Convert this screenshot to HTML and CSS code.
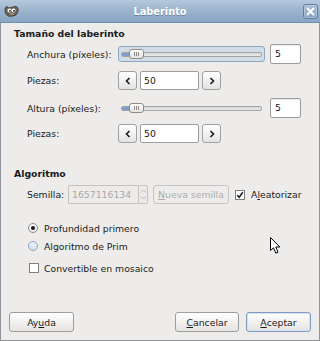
FILE: index.html
```html
<!DOCTYPE html>
<html>
<head>
<meta charset="utf-8">
<link rel="stylesheet" href="styles.css">
</head>
<body>
<div class="window">
  <div class="titlebar">
    <div class="tb-left">
      <svg class="app-icon" width="15" height="13" viewBox="0 0 15 13">
        <path d="M1 3 Q3 0 5 3 L9 2 Q12 0 14 3 Q15 7 12 10 Q8 12 4 11 Q1 9 1 6 Z" fill="#6b655a" stroke="#3b372f" stroke-width="0.8"/>
        <circle cx="5.5" cy="5.5" r="2" fill="#fff"/>
        <circle cx="9.5" cy="5.5" r="2" fill="#fff"/>
        <circle cx="6" cy="5.8" r="0.9" fill="#000"/>
        <circle cx="10" cy="5.8" r="0.9" fill="#000"/>
        <path d="M6 9 L10 9" stroke="#c8b48a" stroke-width="1"/>
      </svg>
    </div>
    <span class="title">Laberinto</span>
    <div class="tb-right">
      <span class="close">
        <svg width="9" height="9" viewBox="0 0 9 9"><path d="M1.5 1.5 L7.5 7.5 M7.5 1.5 L1.5 7.5" stroke="#fff" stroke-width="2" stroke-linecap="round"/></svg>
      </span>
    </div>
  </div>

  <div class="content">
    <div class="section-title">Tamaño del laberinto</div>

    <div class="row r1">
      <span class="label">Anchura (píxeles):</span>
      <div class="scale focused">
        <div class="trough"><div class="fill"></div></div>
        <div class="thumb"><i></i><i></i><i></i></div>
      </div>
      <div class="spin">5</div>
    </div>

    <div class="row r2">
      <span class="label">Piezas:</span>
      <div class="stepper">
        <span class="btn-small">
          <svg width="6" height="8" viewBox="0 0 6 8"><path d="M4.5 1 L1.5 4 L4.5 7" fill="none" stroke="#1a1a1a" stroke-width="1.6"/></svg>
        </span>
        <span class="entry">50</span>
        <span class="btn-small">
          <svg width="6" height="8" viewBox="0 0 6 8"><path d="M1.5 1 L4.5 4 L1.5 7" fill="none" stroke="#1a1a1a" stroke-width="1.6"/></svg>
        </span>
      </div>
    </div>

    <div class="row r3">
      <span class="label">Altura (píxeles):</span>
      <div class="scale">
        <div class="trough"><div class="fill"></div></div>
        <div class="thumb"><i></i><i></i><i></i></div>
      </div>
      <div class="spin">5</div>
    </div>

    <div class="row r4">
      <span class="label">Piezas:</span>
      <div class="stepper">
        <span class="btn-small">
          <svg width="6" height="8" viewBox="0 0 6 8"><path d="M4.5 1 L1.5 4 L4.5 7" fill="none" stroke="#1a1a1a" stroke-width="1.6"/></svg>
        </span>
        <span class="entry">50</span>
        <span class="btn-small">
          <svg width="6" height="8" viewBox="0 0 6 8"><path d="M1.5 1 L4.5 4 L1.5 7" fill="none" stroke="#1a1a1a" stroke-width="1.6"/></svg>
        </span>
      </div>
    </div>

    <div class="section-title t2">Algoritmo</div>

    <div class="row seed-row">
      <span class="label seed-label">Semilla:</span>
      <div class="seed-spin">
        <span class="seed-entry">1657116134</span>
        <span class="seed-arrows">
          <svg width="7" height="4" viewBox="0 0 7 4"><path d="M1 3.5 L3.5 1 L6 3.5" fill="none" stroke="#b5b5b5" stroke-width="1"/></svg>
          <svg width="7" height="4" viewBox="0 0 7 4"><path d="M1 0.5 L3.5 3 L6 0.5" fill="none" stroke="#b5b5b5" stroke-width="1"/></svg>
        </span>
      </div>
      <span class="btn disabled new-seed"><u>N</u>ueva semilla</span>
      <span class="check checked">
        <svg width="8" height="8" viewBox="0 0 8 8"><path d="M1.2 4.2 L3.2 6.3 L6.8 1.2" fill="none" stroke="#1a1a1a" stroke-width="1.5"/></svg>
      </span>
      <span class="check-label">A<u>l</u>eatorizar</span>
    </div>

    <div class="opt o1">
      <span class="radio selected"><i></i></span>
      <span>Profundidad primero</span>
    </div>
    <div class="opt o2">
      <span class="radio hover"></span>
      <span>Algoritmo de Prim</span>
    </div>
    <div class="opt o3">
      <span class="check box"></span>
      <span>Convertible en mosaico</span>
    </div>

    <div class="buttons">
      <span class="btn big">Ay<u>u</u>da</span>
      <span class="spacer"></span>
      <span class="btn big cancel"><u>C</u>ancelar</span>
      <span class="btn big default"><u>A</u>ceptar</span>
    </div>
  </div>
</div>

<svg class="cursor" width="12" height="18" viewBox="0 0 12 18">
  <path d="M0.5 0.5 L0.5 13.5 L3.5 10.8 L5.8 16.2 L8 15.2 L5.8 10 L9.8 10 Z" fill="#fff" stroke="#000" stroke-width="1" stroke-linejoin="round"/>
</svg>
</body>
</html>
```

FILE: styles.css
```css
* { box-sizing: border-box; }
html, body { margin: 0; padding: 0; background: #edeceb; }
body {
  font-family: "DejaVu Sans", "Liberation Sans", sans-serif;
  font-size: 9.3px;
  color: #1a1a1a;
  width: 320px;
  height: 341px;
  overflow: hidden;
  position: relative;
}
u { text-decoration: underline; text-underline-offset: 1px; }

.window {
  width: 320px;
  height: 341px;
  display: flex;
  flex-direction: column;
  border: 1px solid #8d939a;
  border-top: 0;
  background: #edeceb;
}

.titlebar {
  height: 23px;
  flex: none;
  display: grid;
  grid-template-columns: 1fr auto 1fr;
  align-items: center;
  background: linear-gradient(#b4c8dd, #9ab3cd 50%, #8aa6c4);
  border-bottom: 1px solid #738fae;
  margin: 0 -1px;
}
.tb-left { display: flex; align-items: center; padding-left: 4px; }
.app-icon { display: block; }
.title {
  color: #fff;
  font-weight: bold;
  font-size: 9.8px;
  text-shadow: 0 1px 0 #6c87a5;
}
.tb-right { display: flex; justify-content: flex-end; padding-right: 2px; }
.close {
  width: 15px;
  height: 15px;
  display: flex;
  align-items: center;
  justify-content: center;
  border: 1px solid #5f7fa2;
  border-radius: 3px;
  background: linear-gradient(#a7bed6, #88a4c2);
  box-shadow: inset 0 0 0 1px rgba(255,255,255,0.25);
}
.close svg { display: block; }

.content {
  flex: 1;
  display: flex;
  flex-direction: column;
  padding: 5px 8px 8px 13px;
}

.section-title {
  font-weight: bold;
  line-height: 12px;
  height: 12px;
}
.t2 { margin-top: 25px; }

.row {
  display: flex;
  align-items: center;
  padding-left: 13px;
}
.label { width: 91px; flex: none; }
.r1 { margin-top: 4px; height: 20px; }
.r2 { margin-top: 7px; height: 19px; }
.r3 { margin-top: 8px; height: 20px; }
.r4 { margin-top: 6px; height: 19px; }

.scale {
  width: 147px;
  height: 16px;
  position: relative;
  display: flex;
  align-items: center;
  padding: 0 2px;
  border: 1px solid transparent;
  border-radius: 3px;
}
.scale.focused {
  background: #d3dde8;
  border-color: #8ea6c0;
}
.trough {
  flex: 1;
  height: 5px;
  border: 1px solid #a3a3a3;
  border-radius: 2px;
  background: linear-gradient(#d8d8d8, #e9e9e9);
  position: relative;
  overflow: hidden;
}
.fill {
  width: 10px;
  height: 100%;
  background: #7ca0c9;
}
.thumb {
  position: absolute;
  left: 10px;
  top: 2px;
  width: 15px;
  height: 10px;
  border: 1px solid #8c8c8c;
  border-radius: 3px;
  background: linear-gradient(#ffffff, #e3e2e0);
  display: flex;
  align-items: center;
  justify-content: center;
  gap: 1px;
}
.scale:not(.focused) .thumb { top: 2px; }
.thumb i {
  display: block;
  width: 1px;
  height: 4px;
  background: #8a8a8a;
}

.spin {
  margin-left: 5px;
  width: 31px;
  height: 20px;
  border: 1px solid #9d9d9d;
  border-radius: 2px;
  background: #fff;
  padding-left: 4px;
  line-height: 18px;
  box-shadow: inset 0 1px 1px rgba(0,0,0,0.08);
}

.stepper { display: flex; gap: 3px; height: 19px; }
.btn-small {
  width: 19px;
  height: 19px;
  display: flex;
  align-items: center;
  justify-content: center;
  border: 1px solid #a0a0a0;
  border-radius: 3px;
  background: linear-gradient(#ffffff, #e4e3e1);
}
.btn-small svg { display: block; }
.entry {
  width: 59px;
  height: 19px;
  border: 1px solid #9d9d9d;
  border-radius: 2px;
  background: #fff;
  padding-left: 3px;
  line-height: 17px;
}

.seed-row { margin-top: 5px; height: 19px; }
.seed-label { width: 41px; }
.seed-spin { display: flex; height: 19px; }
.seed-entry {
  width: 70px;
  height: 19px;
  border: 1px solid #c3c2c0;
  border-right: 0;
  border-radius: 2px 0 0 2px;
  color: #a9a9a9;
  padding-left: 3px;
  line-height: 17px;
  background: #edeceb;
}
.seed-arrows {
  width: 10px;
  height: 19px;
  border: 1px solid #c3c2c0;
  border-radius: 0 2px 2px 0;
  display: flex;
  flex-direction: column;
  align-items: center;
  justify-content: space-around;
  padding: 2px 0;
}
.seed-arrows svg { display: block; }

.btn {
  display: flex;
  align-items: center;
  justify-content: center;
  border: 1px solid #9e9e9e;
  border-radius: 3px;
  background: linear-gradient(#ffffff, #e5e4e2);
}
.btn.disabled {
  color: #acacac;
  border-color: #c6c5c3;
  background: #edeceb;
}
.new-seed { margin-left: 5px; width: 76px; height: 19px; }

.check {
  width: 10px;
  height: 10px;
  border: 1px solid #7f7f7f;
  background: #fff;
  display: flex;
  align-items: center;
  justify-content: center;
  flex: none;
}
.check svg { display: block; }
.check.checked { margin-left: 6px; }
.check-label { margin-left: 6px; }

.opt {
  display: flex;
  align-items: center;
  height: 16px;
  padding-left: 14px;
}
.o1 { margin-top: 16px; }
.o2 { margin-top: 2px; }
.o3 { margin-top: 6px; padding-left: 15px; }
.o3 .check { margin-right: 5px; }
.radio {
  width: 10px;
  height: 10px;
  border-radius: 50%;
  border: 1px solid #8a8a8a;
  background: linear-gradient(#ffffff, #e8e8e8);
  display: flex;
  align-items: center;
  justify-content: center;
  margin-right: 6px;
  flex: none;
}
.radio.selected i {
  display: block;
  width: 4px;
  height: 4px;
  border-radius: 50%;
  background: #1a1a1a;
}
.radio.hover {
  border-color: #86a4c6;
  background: linear-gradient(#eef3f9, #d2deeb);
}

.buttons {
  margin-top: auto;
  display: flex;
  align-items: center;
  gap: 7px;
  margin-left: -5px;
}
.spacer { flex: 1; }
.btn.big { height: 20px; width: 65px; }
.btn.cancel { width: 64px; }
.btn.default {
  border-color: #7f9dc0;
  box-shadow: inset 0 0 0 1px #d6e2ef;
}

.cursor {
  position: absolute;
  left: 270px;
  top: 237px;
}
```
